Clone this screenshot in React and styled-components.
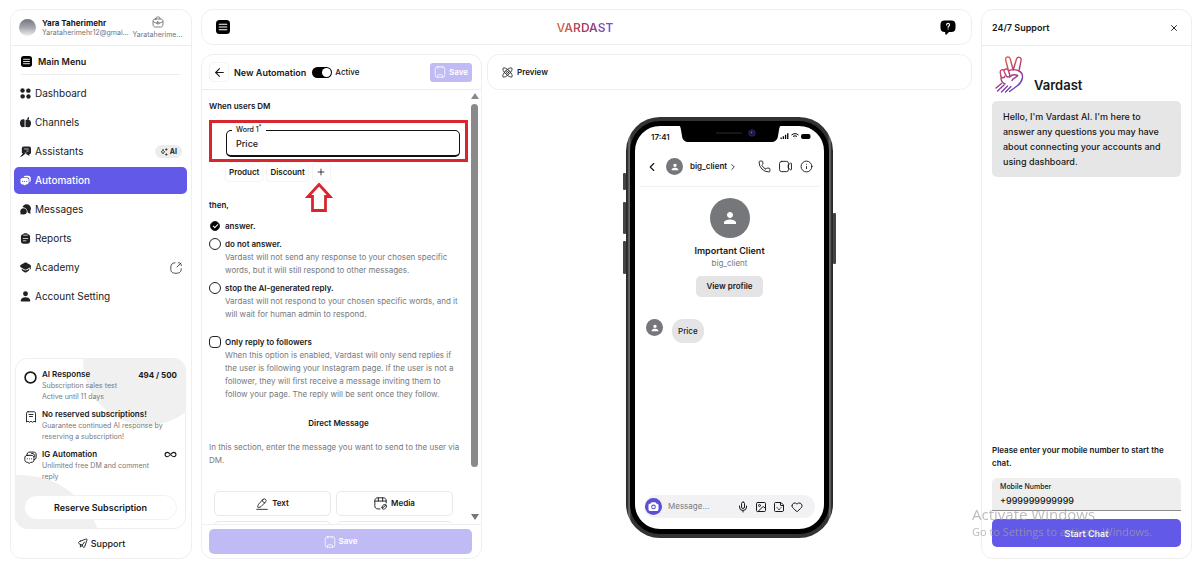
import React, { useState } from 'react';
import styled, { createGlobalStyle, css } from 'styled-components';
import {
    ArrowLeft, ChevronLeft, ChevronRight, Heart, Image, Infinity as InfinityIcon,
    Info, Mic, Phone, Plus, Sticker, X
} from 'lucide-react';
import { MdPerson } from 'react-icons/md';


const GlobalStyle = createGlobalStyle`
    *, *::before, *::after {
        box-sizing: border-box;
    }

    body {
        margin: 0;
        background: #fff;
        color: #17181a;
        font-family: Inter, "Liberation Sans", sans-serif;
        font-size: 8px;
        line-height: 13px;
    }

    button, input {
        font: inherit;
        color: inherit;
    }

    button {
        cursor: pointer;
    }

    h1, h2, h3, p, ul {
        margin: 0;
        padding: 0;
        font-size: inherit;
    }

    svg {
        display: block;
        flex-shrink: 0;
    }
`;

const Page = styled.div`
    display: grid;
    grid-template-columns: 182px minmax(0, 1fr) 211px;
    gap: 9px;
    height: 100vh;
    min-height: 560px;
    padding: 9px 8px 8px 10px;
`;

const panel = css`
    background: #fff;
    border: 1px solid #efeff0;
    border-radius: 12px;
`;

const IconButton = styled.button`
    display: grid;
    place-items: center;
    padding: 0;
    border: none;
    background: none;
`;

/* ---------- sidebar ---------- */

const Sidebar = styled.nav`
    ${panel}
    display: flex;
    flex-direction: column;
    min-height: 0;
`;

const Profile = styled.div`
    display: flex;
    align-items: center;
    gap: 6px;
    height: 36px;
    padding: 0 9px 0 8px;
    border-bottom: 1px solid #ececed;
`;

const Avatar = styled.div`
    width: 17px;
    height: 17px;
    flex-shrink: 0;
    border-radius: 50%;
    background: linear-gradient(#73757f, #a5a6ad 50%, #f0f0f1);
`;

const ProfileText = styled.div`
    flex: 1;
    min-width: 0;
    line-height: 10px;
`;

const ProfileName = styled.div`
    font-weight: 700;
`;

const SmallText = styled.div`
    color: #717377;
    font-size: 7px;
    white-space: nowrap;
`;

const Workspace = styled.div`
    display: flex;
    flex-direction: column;
    align-items: center;
    gap: 2px;
    width: 49px;
    line-height: 9px;
    color: #55575b;
`;

const MenuTitle = styled.h2`
    display: flex;
    align-items: center;
    gap: 6px;
    height: 29px;
    margin: 0 11px 0 10px;
    padding-top: 2px;
    border-bottom: 1px solid #ececed;
    font-size: 9px;
    font-weight: 600;
`;

const MenuList = styled.ul`
    display: flex;
    flex-direction: column;
    gap: 2px;
    margin-top: 5px;
    padding: 0 4px 0 3px;
    list-style: none;
`;

const MenuLink = styled.a`
    display: flex;
    align-items: center;
    gap: 4px;
    height: 27px;
    padding: 0 5px 0 6px;
    border-radius: 5px;
    background: ${props => props.$active ? "#6359e9" : "transparent"};
    color: ${props => props.$active ? "#fff" : "#202124"};
    font-size: 10px;
    font-weight: ${props => props.$active ? 500 : 400};
    text-decoration: none;
`;

const MenuEnd = styled.span`
    margin-left: auto;
`;

const AiBadge = styled.span`
    display: flex;
    align-items: center;
    gap: 2px;
    height: 13px;
    padding: 0 5px;
    border-radius: 7px;
    background: #ececed;
    font-size: 7px;
    font-weight: 700;
`;

const PlanCard = styled.section`
    position: relative;
    display: flex;
    flex-direction: column;
    margin: auto 5px 0 4px;
    padding: 9px 8px 8px;
    border: 1px solid #efeff0;
    border-radius: 12px;
    overflow: hidden;

    &::before, &::after {
        content: "";
        position: absolute;
        border-radius: 50%;
        background: #f0f0f0;
    }

    &::before {
        width: 128px;
        height: 128px;
        top: -62px;
        left: 67px;
    }

    &::after {
        width: 164px;
        height: 160px;
        left: -78px;
        bottom: -107px;
    }

    > * {
        position: relative;
        z-index: 1;
    }
`;

const PlanRow = styled.div`
    display: grid;
    grid-template-columns: 13px 1fr auto;
    gap: 5px;
    margin-bottom: 6px;
`;

const PlanIcon = styled.div`
    display: grid;
    justify-items: center;
    padding-top: 3px;
`;

const PlanTitle = styled.h3`
    font-size: 8px;
    font-weight: 600;
    line-height: 12px;
    white-space: nowrap;
`;

const PlanText = styled.p`
    color: #77797d;
    font-size: 7px;
    line-height: 11px;
`;

const PlanValue = styled.span`
    font-weight: 700;
    line-height: 15px;
`;

const ReserveButton = styled.button`
    height: 25px;
    margin-top: 7px;
    border: 1px solid #f1f1f1;
    border-radius: 13px;
    background: #fff;
    font-size: 9px;
    font-weight: 600;
`;

const SupportLink = styled.a`
    display: flex;
    align-items: center;
    justify-content: center;
    gap: 3px;
    height: 29px;
    color: inherit;
    font-size: 9px;
    font-weight: 500;
    text-decoration: none;
`;

/* ---------- centre ---------- */

const Main = styled.main`
    display: flex;
    flex-direction: column;
    gap: 9px;
    min-width: 0;
    min-height: 0;
`;

const TopBar = styled.header`
    ${panel}
    display: flex;
    align-items: center;
    justify-content: space-between;
    height: 36px;
    flex-shrink: 0;
    padding: 0 15px 0 14px;
`;

const Brand = styled.h1`
    background: linear-gradient(90deg, #d9774a, #a8375f 50%, #6359e9);
    background-clip: text;
    color: transparent;
    font-size: 12px;
    font-weight: 600;
`;

const Workarea = styled.div`
    display: grid;
    grid-template-columns: 281px minmax(0, 1fr);
    gap: 5px;
    flex: 1;
    min-height: 0;
`;

const Editor = styled.form`
    ${panel}
    display: flex;
    flex-direction: column;
    min-height: 0;
    overflow: hidden;
`;

const EditorHeader = styled.div`
    display: flex;
    align-items: center;
    gap: 5px;
    height: 35px;
    flex-shrink: 0;
    padding: 0 9px 0 7px;
    border-bottom: 1px solid #ececed;
`;

const BackButton = styled(IconButton)`
    width: 20px;
    height: 20px;
    border: 1px solid #f3f3f4;
    border-radius: 4px;
`;

const EditorTitle = styled.h2`
    font-size: 9px;
    font-weight: 600;
`;

const SwitchLabel = styled.label`
    display: flex;
    align-items: center;
    gap: 3px;
    margin-left: 1px;
    font-weight: 500;
`;

const Switch = styled.input`
    width: 20px;
    height: 11px;
    margin: 0;
    padding: 1px;
    appearance: none;
    border-radius: 6px;
    background: ${props => props.checked ? "#000" : "#b5b5b8"};

    &::before {
        content: "";
        display: block;
        width: 9px;
        height: 9px;
        margin-left: ${props => props.checked ? "auto" : 0};
        border-radius: 50%;
        background: #fff;
    }
`;

const SaveButton = styled.button`
    display: flex;
    align-items: center;
    justify-content: center;
    gap: 3px;
    height: ${props => props.$small ? "19px" : "25px"};
    padding: 0 4px;
    border: none;
    border-radius: ${props => props.$small ? "3px" : "5px"};
    background: #c1bbf5;
    color: #fff;
    font-weight: 600;
`;

const PushRight = styled.div`
    margin-left: auto;
`;

const EditorBody = styled.div`
    display: flex;
    flex: 1;
    min-height: 0;
`;

const EditorContent = styled.div`
    flex: 1;
    min-width: 0;
    padding: 10px 2px 0 7px;
    overflow: hidden;
`;

const Heading = styled.h3`
    font-weight: 600;
    text-align: ${props => props.$center ? "center" : "left"};
`;

const Highlight = styled.div`
    margin-top: 7px;
    padding: 7px 5px 2px 14px;
    border: 3px solid #d9262e;
`;

const OutlinedField = styled.div`
    position: relative;

    label {
        position: absolute;
        top: -7px;
        left: 6px;
        padding: 0 4px;
        background: #fff;
        font-size: 7px;
        font-weight: 500;
    }

    sup {
        font-size: 6px;
        line-height: 0;
    }

    input {
        display: block;
        width: 100%;
        height: 27px;
        padding: 0 9px;
        border: 1px solid #111;
        border-bottom-width: 2px;
        border-radius: 5px;
        outline: none;
        background: none;
        font-size: 9px;
        font-weight: 500;
    }
`;

const Chips = styled.div`
    position: relative;
    display: flex;
    gap: 3px;
    padding-left: 16px;
`;

const Chip = styled.button`
    display: grid;
    place-items: center;
    min-width: 19px;
    height: 20px;
    padding: 0 3px;
    border: 1px solid #f4f4f5;
    border-radius: 4px;
    background: #fff;
    font-weight: 600;
`;

/* sits over the gap under the plus chip */
const PointerArrow = styled.svg`
    position: absolute;
    top: 20px;
    left: 96px;
`;

const Then = styled(Heading)`
    margin: 17px 0 8px;
`;

const Option = styled.div`
    display: grid;
    grid-template-columns: 12px 1fr;
    column-gap: 4px;
    margin-bottom: ${props => props.$space || 5}px;
    padding-right: 6px;

    label {
        font-weight: 600;
    }

    p {
        grid-column: 2;
    }
`;

const Muted = styled.p`
    color: #77797d;
`;

const Choice = styled.input`
    display: grid;
    place-items: center;
    width: 12px;
    height: 12px;
    margin: 0;
    appearance: none;
    border: 1px solid #222;
    border-radius: ${props => props.type === "radio" ? "50%" : "4px"};
    background: #fff;

    &:checked {
        width: 10px;
        height: 10px;
        margin: 1px;
        background: #000;
    }

    &:checked::after {
        content: "";
        width: 5px;
        height: 3px;
        border: solid #fff;
        border-width: 0 0 1px 1px;
        transform: translateY(-1px) rotate(-45deg);
    }
`;

const Intro = styled(Muted)`
    margin-top: 11px;
`;

const BlockGrid = styled.div`
    display: grid;
    grid-template-columns: 1fr 1fr;
    gap: 5px;
    margin-top: 24px;
    padding: 0 15px 0 5px;
`;

const BlockButton = styled.button`
    display: flex;
    align-items: center;
    justify-content: center;
    gap: 4px;
    height: 25px;
    border: 1px solid #e9e9ea;
    border-radius: 5px;
    background: #fff;
    font-weight: 600;
`;

const ScrollRail = styled.div`
    display: flex;
    flex-direction: column;
    align-items: center;
    width: 9px;
    margin-right: 2px;
    padding: 3px 0 4px;
`;

const ScrollThumb = styled.div`
    width: 7px;
    height: 85%;
    margin: 5px 0 auto;
    border-radius: 4px;
    background: #8a8a8a;
`;

const EditorFooter = styled.div`
    display: grid;
    padding: 4px 9px 4px 7px;
    border-top: 1px solid #efeff0;
`;

const PreviewColumn = styled.section`
    display: flex;
    flex-direction: column;
    align-items: center;
    min-height: 0;
`;

const PreviewBar = styled.div`
    ${panel}
    display: flex;
    align-items: center;
    gap: 4px;
    align-self: stretch;
    height: 36px;
    flex-shrink: 0;
    padding: 0 14px;
    font-weight: 600;
`;

/* ---------- phone ---------- */

const PhoneFrame = styled.div`
    position: relative;
    display: flex;
    width: 207px;
    height: 421px;
    margin-top: 27px;
    padding: 4px;
    border-radius: 34px;
    background: linear-gradient(90deg, #29292a 1px, #3a3a3b 2px, #77777a 3px, #333 5px, #333 202px, #77777a 204px, #3a3a3b 205px, #29292a 206px);
`;

const SideKey = styled.span`
    position: absolute;
    top: ${props => props.$top}px;
    ${props => props.$right ? "right: -3px;" : "left: -3px;"}
    width: 3px;
    height: ${props => props.$size}px;
    border-radius: 1px;
    background: #444;
`;

const Screen = styled.div`
    position: relative;
    display: flex;
    flex-direction: column;
    flex: 1;
    border: 5px solid #000;
    border-radius: 30px;
    background: #fff;
    overflow: hidden;
`;

const Notch = styled.svg`
    position: absolute;
    top: -1px;
    left: 42px;
`;

const StatusBar = styled.div`
    display: flex;
    align-items: center;
    justify-content: space-between;
    height: 21px;
    padding: 2px 13px 0 16px;
    font-weight: 600;
`;

const StatusIcons = styled.div`
    display: flex;
    align-items: center;
    gap: 2px;
    padding-bottom: 3px;
`;

const ChatHeader = styled.div`
    display: flex;
    align-items: center;
    gap: 7px;
    height: 40px;
    margin: 0 5px;
    padding: 0 6px 0 5px;
    border-bottom: 1px solid #f1f1f2;
    font-weight: 600;
`;

const ChatName = styled.span`
    display: flex;
    align-items: center;
    gap: 1px;
`;

const ChatActions = styled.div`
    display: flex;
    gap: 8px;
    margin-left: auto;
`;

const PersonCircle = styled.div`
    display: grid;
    place-items: center;
    width: ${props => props.$size}px;
    height: ${props => props.$size}px;
    flex-shrink: 0;
    border-radius: 50%;
    background: #76777a;
    color: #fff;
`;

const ClientCard = styled.div`
    display: flex;
    flex-direction: column;
    align-items: center;
    padding-top: 11px;
`;

const ClientName = styled.div`
    margin-top: 6px;
    font-size: 9px;
    font-weight: 600;
`;

const ProfileButton = styled.button`
    height: 21px;
    margin-top: 6px;
    padding: 0 10px;
    border: none;
    border-radius: 5px;
    background: #e4e4e6;
    font-weight: 600;
`;

const ChatLine = styled.div`
    display: flex;
    gap: 9px;
    margin: 22px 0 0 11px;
`;

const Bubble = styled.div`
    height: 24px;
    padding: 0 6px;
    border-radius: 11px;
    background: #e4e4e6;
    font-weight: 500;
    line-height: 24px;
`;

const Composer = styled.div`
    display: flex;
    align-items: center;
    gap: 6px;
    height: 23px;
    margin: auto 9px 11px;
    padding: 0 12px 0 1px;
    border-radius: 12px;
    background: #f2f2f4;
`;

const CameraCircle = styled(PersonCircle)`
    background: #5b50cf;
`;

const MessageInput = styled.input`
    flex: 1;
    min-width: 0;
    padding: 0;
    border: none;
    outline: none;
    background: none;

    &::placeholder {
        color: #77797d;
    }
`;

const ComposerIcons = styled.div`
    display: flex;
    gap: 6px;
`;

/* ---------- support ---------- */

const SupportPanel = styled.aside`
    ${panel}
    display: flex;
    flex-direction: column;
    min-height: 0;
`;

const SupportHeader = styled.div`
    display: flex;
    align-items: center;
    justify-content: space-between;
    height: 36px;
    padding: 0 12px 0 10px;
    border-bottom: 1px solid #ececed;
    font-size: 9px;
    font-weight: 600;
`;

const SupportBody = styled.div`
    display: flex;
    flex-direction: column;
    flex: 1;
    padding: 10px 10px 11px;
`;

const BotTitle = styled.div`
    display: flex;
    align-items: flex-end;
    gap: 9px;
    padding-left: 3px;
    font-size: 13px;
    font-weight: 600;
    line-height: 18px;
`;

const Greeting = styled.p`
    margin-top: 7px;
    padding: 8px 11px;
    border-radius: 5px;
    background: #e6e6e6;
    font-size: 9px;
    font-weight: 500;
    line-height: 15px;
`;

const Prompt = styled.p`
    margin-top: auto;
    font-weight: 600;
`;

const PhoneField = styled.div`
    display: flex;
    flex-direction: column;
    margin: 8px 0;
    padding: 2px 8px;
    border-bottom: 1px solid #8c8c8c;
    border-radius: 5px 5px 0 0;
    background: #eee;

    label {
        font-size: 7px;
        font-weight: 500;
    }

    input {
        width: 100%;
        height: 15px;
        padding: 0;
        border: none;
        outline: none;
        background: none;
        font-size: 9px;
        font-weight: 500;
    }
`;

const StartButton = styled.button`
    height: 28px;
    border: none;
    border-radius: 5px;
    background: #6359e9;
    color: #fff;
    font-size: 9px;
    font-weight: 600;
`;

const Watermark = styled.div`
    position: fixed;
    right: 53px;
    bottom: 27px;
    width: 175px;
    color: rgba(160, 160, 165, 0.7);
    font-family: "Open Sans", "Noto Sans", sans-serif;
    font-size: 11px;
    line-height: 16px;
    white-space: nowrap;
    pointer-events: none;

    strong {
        display: block;
        font-size: 15px;
        font-weight: 400;
        line-height: 20px;
    }
`;

/* ---------- icons ---------- */

const MenuIcon = ({ size }) => (
    <svg width={size} height={size} viewBox="0 0 14 14">
        <rect width="14" height="14" rx="3.5" fill="#000" />
        <path d="M3.2 4.2h7.6M3.2 7h7.6M3.2 9.8h7.6" stroke="#fff" strokeWidth="1.1" strokeLinecap="round" />
    </svg>
);

const SolidIcon = ({ children, size = 11 }) => (
    <svg width={size} height={size} viewBox="0 0 24 24" fill="currentColor">{children}</svg>
);

const LineIcon = ({ children, size = 12, width = 1.8 }) => (
    <svg
        width={size} height={size} viewBox="0 0 24 24" fill="none" stroke="currentColor"
        strokeWidth={width} strokeLinecap="round" strokeLinejoin="round"
    >
        {children}
    </svg>
);

const DashboardIcon = () => (
    <SolidIcon>
        <circle cx="5.5" cy="5.5" r="4.8" />
        <rect x="13.5" y="1" width="9.5" height="9.5" rx="4" />
        <rect x="1" y="13.5" width="9.5" height="9.5" rx="4" />
        <circle cx="18.5" cy="18.5" r="4.8" />
    </SolidIcon>
);

const ChannelsIcon = () => (
    <SolidIcon>
        <path d="M8.5 5C3.500 4 0 7 0 13c0 5.500 2.500 9.500 6 9.500 1.700 0 2.500-.5 4-.5V6C9.700 5.500 9 5.100 8.500 5z" />
        <path d="M12 6.500c1.500-1 3-.8 4-.3V4c0-1.700 1-3 3.500-4v4c0 1-.6 2-1.500 2.700C22 5.500 24 9 24 13.500c0 5-2.500 9-5.500 9-2 0-2.500-.6-4-.6-.8 0-1.700.3-2.500.4z" />
    </SolidIcon>
);

const AssistantsIcon = () => (
    <SolidIcon>
        <path d="M8 1h12a4 4 0 0 1 4 4v9a4 4 0 0 1-4 4l.5 4-6-4H12l2.500-3-2-2L7 16l-3-1V5a4 4 0 0 1 4-4z" />
        <path d="M2 23l4-7 5-3 2.500 1L10 18l-4 3z" />
        <path d="M9 6.500h10M14 11h5" stroke="#fff" strokeWidth="1.5" />
        <path d="M1 23l5-3" stroke="currentColor" strokeWidth="2" />
    </SolidIcon>
);

const AutomationIcon = () => (
    <SolidIcon>
        <path d="M8 5c.4-2.500 2.300-3.500 4.500-3.500H18c3.500 0 5.500 2 5.500 5.500v4c0 2.500-1 4.300-3 5V10c0-3.500-1.500-5-5-5z" />
        <path d="M6 6.500h8c3.300 0 5 1.700 5 5v4c0 3.300-1.700 5-5 5h-1.500L10 23l-2.500-2.500H6c-3.500 0-5-1.700-5-5v-4c0-3.300 1.700-5 5-5z" />
        <g fill="#6359e9">
            <circle cx="5.500" cy="14" r="1.200" /><circle cx="10" cy="14" r="1.200" /><circle cx="14.500" cy="14" r="1.200" />
        </g>
    </SolidIcon>
);

const MessagesIcon = () => (
    <SolidIcon>
        <path d="M5.500 7C6.500 3.500 9.500.5 14 .5c5.800 0 10 4.200 10 9.500 0 2-.6 3.800-1.700 5.300l.7 5.700-6-2c0-6-4.500-12-11.500-12z" />
        <path d="M7.500 9.500c4.300 0 7.500 3 7.500 6.700S12 23 7.500 23c-1 0-2-.2-3-.6L.8 23l.6-3.300C.8 18.700.5 17.500.5 16.200c0-3.700 3-6.700 7-6.700z" />
    </SolidIcon>
);

const ReportsIcon = () => (
    <SolidIcon>
        <path d="M7 2.500C7.300 1.300 8.300.5 9.500.5h5c1.200 0 2.200.8 2.500 2 3.300.2 5 1.800 5 5.500v9c0 4-2 6.500-6 6.500H8c-4 0-6-2.500-6-6.500V8c0-3.700 1.700-5.300 5-5.500z" />
        <path d="M8 4.800h8M7 12h10M7 17h6" stroke="#fff" strokeWidth="1.600" strokeLinecap="round" />
    </SolidIcon>
);

const AcademyIcon = () => (
    <SolidIcon>
        <path d="M9 2c2-1 4-1 6 0l7 4c2.300 1.500 2.300 4 0 5.500l-7 4.500c-2 1.200-4 1.200-6 0l-7-4.500C-.3 10-.3 7.500 2 6z" />
        <path d="M3.500 14.500l5 3.200c2.200 1.300 4.800 1.300 7 0l5-3.200c0 2.500-1 4.500-3 5.500L14 22.500c-1.300.6-2.700.6-4 0L6.500 20c-2-1-3-3-3-5.500z" />
        <path d="M22.500 10v5" stroke="currentColor" strokeWidth="2" strokeLinecap="round" />
    </SolidIcon>
);

const AccountIcon = () => (
    <SolidIcon>
        <circle cx="12" cy="6" r="5.300" />
        <path d="M1.500 22c0-5.500 4-8.500 10.500-8.500s10.500 3 10.500 8.500c0 .6-.4 1-1 1h-19c-.6 0-1-.4-1-1z" />
    </SolidIcon>
);

const ExternalIcon = () => (
    <LineIcon width={1.6}>
        <path d="M14 10L22 2M17 1.500c4 0 5.500 1.500 5.500 5.500M10 1.500C4 2 1.500 5 1.500 12c0 8 2.500 10.500 10.500 10.500 7.500 0 10.300-2.500 10.500-9" />
    </LineIcon>
);

const BriefcaseIcon = () => (
    <LineIcon width={1.5}>
        <path d="M8 6V4.500C8 3 9 2 10.500 2h3C15 2 16 3 16 4.500V6M7 6h10c3.500 0 5 1.500 5 5v5c0 4-1.500 6-5 6H7c-3.500 0-5-2-5-6v-5c0-3.500 1.500-5 5-5zM2.500 11c2 2 4.500 3 7.500 3.300M21.500 11c-2 2-4.500 3-7.500 3.300" />
        <rect x="10" y="12" width="4" height="4" rx="1" />
    </LineIcon>
);

const SparkIcon = () => (
    <LineIcon size={8} width={2.2}>
        <path d="M9 5c.8 4 2 5.500 6 6.500-4 1-5.200 2.500-6 6.500-.8-4-2-5.500-6-6.500 4-1 5.200-2.500 6-6.500zM19 2v5M16.500 4.500h5M19 17v5M16.500 19.500h5" />
    </LineIcon>
);

const ReceiptIcon = () => (
    <LineIcon width={1.8}>
        <path d="M6 1.500h12c2 0 3 1 3 3V22l-3-1.500-3 2-3-2-3 2-3-2L3 22V4.500c0-2 1-3 3-3zM8 7h8M9 11h6" />
    </LineIcon>
);

const ChatsIcon = () => (
    <LineIcon size={13} width={1.8}>
        <path d="M7 8h6c4 0 5.500 1.500 5.500 5.500v2c0 4-1.500 5.500-5.500 5.500h-1L9.500 23 7 21C3 21 1.500 19.500 1.500 15.500v-2C1.500 9.500 3 8 7 8zM5 8c.4-4 2-6 6-6h6c4 0 5.500 1.500 5.500 5.500v3c0 3.500-1 5-4 5.500" />
        <path d="M6 14.500h.1M10 14.500h.1M14 14.500h.1M14 4.500c4.500 0 6 1.500 6 6" />
    </LineIcon>
);

const PlaneIcon = () => (
    <LineIcon size={11} width={2}>
        <path d="M7 7L19 2.500c2.500-.9 3.300 0 2.500 2.500L17 18.500c-1 3.200-2.500 3.200-4 .5l-1.500-3.500L7.500 14C2 12 2 9 7 7zM11.500 15.500L16 9M7.500 14v6l3-3" />
    </LineIcon>
);

const SaveIcon = ({ size = 12 }) => (
    <LineIcon size={size} width={1.6}>
        <path d="M7.500 1.500h9c3.500 0 5 1.500 5 5v11c0 3.500-1.500 5-5 5h-9c-3.500 0-5-1.500-5-5v-11c0-3.500 1.500-5 5-5zM8 2v2.500M16 2v2.500M7 22v-2c0-2 1-2.500 3-2.500h4c2 0 3 .5 3 2.500v2" />
    </LineIcon>
);

const TextIcon = () => (
    <LineIcon width={1.7}>
        <path d="M14 3L5 12.500c-.5.5-.8 1.200-.9 2L3.500 18c-.1.700.3 1.100 1 1l3.500-.6c.8-.1 1.400-.5 1.900-1L19 8c1.500-1.600 2-3.500 0-5.300-1.900-1.700-3.600-1.200-5 .3zM12.500 4.500c.5 3 2.500 5 5.300 5.300M1.500 22.700h21" />
    </LineIcon>
);

const MediaIcon = () => (
    <LineIcon size={13} width={1.7}>
        <path d="M22.500 11V7.500c0-4-1.500-6-5.500-6H7.500c-4 0-6 2-6 6V16c0 4 2 6 6 6H11M1.500 7.500h21M8 1.500v6M16 1.500v6" />
        <path d="M15 19.500c0-3.500 2-5.500 5-5.500 2 0 3 1 3 2.500 0 3.500-2.500 6-5.500 6-1.800 0-2.500-1.200-2.500-3zM16 20l6-5" />
    </LineIcon>
);

const VideoIcon = () => (
    <LineIcon size={13} width={1.7}>
        <rect x="1" y="2.500" width="16.500" height="19" rx="4" />
        <path d="M17.500 9l3.500-3c1-.9 2-.4 2 .8v10.400c0 1.200-1 1.700-2 .8l-3.500-3z" />
    </LineIcon>
);

const AtomIcon = () => (
    <LineIcon size={11} width={1.8}>
        <path d="M15.700 8.300c5.300 5.300 7.800 11 6.200 13.200-2 1.800-8.300-1-13.600-6.300S.7 4.500 2.500 2.500s7.900.5 13.200 5.800z" />
        <path d="M8.300 8.300C3 13.600.5 19.300 2.100 21.500c2 1.800 8.300-1 13.600-6.300s7.600-10.700 5.800-12.700-7.900.5-13.200 5.800z" />
        <circle cx="12" cy="12" r="2.300" />
    </LineIcon>
);

const HelpIcon = () => (
    <svg width="16" height="15" viewBox="0 0 16 15">
        <path d="M4.500.5h7C14 .5 15.500 2 15.500 4.500V8c0 2.500-1.500 4-4 4H9l-2.500 2.400c-.6.5-1.300.2-1.300-.6V12H4.500C2 12 .5 10.500.5 8V4.500C.5 2 2 .5 4.500.5z" fill="#000" />
        <path d="M6.600 5c0-1 .7-1.600 1.500-1.600S9.600 4 9.600 4.900c0 1-1.500 1.200-1.500 2.300M8.100 8.900v.1" fill="none" stroke="#fff" strokeWidth="1.100" strokeLinecap="round" />
    </svg>
);

const CameraIcon = () => (
    <svg width="11" height="11" viewBox="0 0 24 24">
        <path d="M8 2.500h8l2 3c3.500.2 5 1.700 5 4.500v7c0 3.300-1.500 5-5 5H6c-3.500 0-5-1.700-5-5v-7c0-2.800 1.500-4.300 5-4.500z" fill="#fff" />
        <circle cx="12" cy="13" r="4" fill="#fff" stroke="#5b50cf" strokeWidth="2.200" />
    </svg>
);

const StatusGlyphs = () => (
    <StatusIcons>
        <svg width="9" height="6" viewBox="0 0 9 6">
            <path d="M.5 4.500h1.300V6H.5zM2.700 3.300H4V6H2.700zM4.900 1.800h1.300V6H4.900zM7.100.2h1.300V6H7.100z" />
        </svg>
        <svg width="8" height="6" viewBox="0 0 8 6" fill="none" stroke="#000">
            <path d="M.5 2C2.500.2 5.500.2 7.500 2M2 3.600c1.200-1 2.800-1 4 0M3.800 5.100h.4" />
        </svg>
        <svg width="10" height="5" viewBox="0 0 10 5"><rect width="9.500" height="5" rx="2" /></svg>
    </StatusIcons>
);

const HandLogo = () => (
    <svg width="30" height="38" viewBox="0 0 30 38" fill="none" strokeWidth="1.400" strokeLinecap="round" strokeLinejoin="round">
        <defs>
            <linearGradient id="hand" x1="6" y1="4" x2="24" y2="32" gradientUnits="userSpaceOnUse">
                <stop offset="0" stopColor="#e0684a" />
                <stop offset=".5" stopColor="#b03a78" />
                <stop offset="1" stopColor="#5546c8" />
            </linearGradient>
        </defs>
        <g stroke="url(#hand)">
            <path d="M13 13L10.700 4c-.8-3.200 3.600-4.300 4.500-1.200L18.200 14M18.200 14l3.300-11c1-3 5.400-1.900 4.600 1.200L24 15" />
            <path d="M9.500 13.800c1.200-1.400 3.600-.9 4 .9l1.200 4c.6 2.300-2.700 3.300-3.500 1.100l-2-4c-.3-.8-.2-1.500.3-2z" />
            <path d="M9 14.300c-1.400-1.200-3.700-.3-3.800 1.700l.6 4c.5 2.400 3.700 2.300 4 .2M13.500 14.500c4-1.200 8-1 10.500.5 3 1.500 4 4 3.300 7.500-.8 3.700-3.300 6-5.300 7.500L14.500 35.500M14.700 21c2-2.300 5.300-2.600 8-1.500-1 2.300-4.700 2-5.700 5M6 21.500c0 3.500 1.500 5.500 4 6.500" />
            <path d="M6.500 27.500L1 32M9 29l-6.500 6M12.500 30L6.500 36M16 30.500l-5.500 5.500" />
        </g>
    </svg>
);


const menuItems = [
    { label: "Dashboard", icon: <DashboardIcon /> },
    { label: "Channels", icon: <ChannelsIcon /> },
    { label: "Assistants", icon: <AssistantsIcon />, end: <AiBadge><SparkIcon />AI</AiBadge> },
    { label: "Automation", icon: <AutomationIcon />, active: true },
    { label: "Messages", icon: <MessagesIcon /> },
    { label: "Reports", icon: <ReportsIcon /> },
    { label: "Academy", icon: <AcademyIcon />, end: <ExternalIcon /> },
    { label: "Account Setting", icon: <AccountIcon /> },
];

const plans = [
    {
        title: "AI Response",
        text: <>Subscription sales test<br />Active until 11 days</>,
        icon: <LineIcon size={13} width={3}><circle cx="12" cy="12" r="10" /></LineIcon>,
        value: "494 / 500",
    },
    {
        title: "No reserved subscriptions!",
        text: <>Guarantee continued AI response by<br />reserving a subscription!</>,
        icon: <ReceiptIcon />,
    },
    {
        title: "IG Automation",
        text: <>Unlimited free DM and comment<br />reply</>,
        icon: <ChatsIcon />,
        value: <InfinityIcon size={13} strokeWidth={2} />,
    },
];

const answers = [
    { id: "answer", label: "answer." },
    {
        id: "skip",
        label: "do not answer.",
        text: "Vardast will not send any response to your chosen specific words, but it will still respond to other messages.",
    },
    {
        id: "stop",
        label: "stop the AI-generated reply.",
        text: "Vardast will not respond to your chosen specific words, and it will wait for human admin to respond.",
        space: 15,
    },
];

const SideMenu = () => (
    <Sidebar>
        <Profile>
            <Avatar />
            <ProfileText>
                <ProfileName>Yara Taherimehr</ProfileName>
                <SmallText>Yarataherimehr12@gmai...</SmallText>
            </ProfileText>
            <Workspace>
                <BriefcaseIcon />
                <SmallText>Yarataherime...</SmallText>
            </Workspace>
        </Profile>
        <MenuTitle><MenuIcon size={11} />Main Menu</MenuTitle>
        <MenuList>
            {menuItems.map(item => (
                <li key={item.label}>
                    <MenuLink href="#" $active={item.active}>
                        {item.icon}
                        {item.label}
                        {item.end && <MenuEnd>{item.end}</MenuEnd>}
                    </MenuLink>
                </li>
            ))}
        </MenuList>
        <PlanCard>
            {plans.map(plan => (
                <PlanRow key={plan.title}>
                    <PlanIcon>{plan.icon}</PlanIcon>
                    <div>
                        <PlanTitle>{plan.title}</PlanTitle>
                        <PlanText>{plan.text}</PlanText>
                    </div>
                    {plan.value && <PlanValue>{plan.value}</PlanValue>}
                </PlanRow>
            ))}
            <ReserveButton>Reserve Subscription</ReserveButton>
        </PlanCard>
        <SupportLink href="#"><PlaneIcon />Support</SupportLink>
    </Sidebar>
);

const AutomationEditor = ({ word, setWord }) => {
    const [active, setActive] = useState(true);
    const [answer, setAnswer] = useState("answer");
    const [followers, setFollowers] = useState(false);

    return (
        <Editor onSubmit={event => event.preventDefault()}>
            <EditorHeader>
                <BackButton type="button" aria-label="Back"><ArrowLeft size={13} strokeWidth={2} /></BackButton>
                <EditorTitle>New Automation</EditorTitle>
                <SwitchLabel>
                    <Switch type="checkbox" checked={active} onChange={event => setActive(event.target.checked)} />
                    Active
                </SwitchLabel>
                <PushRight>
                    <SaveButton $small><SaveIcon />Save</SaveButton>
                </PushRight>
            </EditorHeader>
            <EditorBody>
                <EditorContent>
                    <Heading>When users DM</Heading>
                    <Highlight>
                        <OutlinedField>
                            <input id="word" value={word} onChange={event => setWord(event.target.value)} />
                            <label htmlFor="word">Word 1<sup>*</sup></label>
                        </OutlinedField>
                    </Highlight>
                    <Chips>
                        <Chip type="button">Product</Chip>
                        <Chip type="button">Discount</Chip>
                        <Chip type="button" aria-label="Add word"><Plus size={10} strokeWidth={2} /></Chip>
                        <PointerArrow width="28" height="31" viewBox="0 0 28 31">
                            <path d="M14 2.500L25 14.500h-4.500V28.500h-13V14.500H3z" fill="#fff" stroke="#d9262e" strokeWidth="2.800" />
                        </PointerArrow>
                    </Chips>
                    <Then>then,</Then>
                    {answers.map(item => (
                        <Option key={item.id} $space={item.space}>
                            <Choice
                                type="radio"
                                name="answer"
                                id={item.id}
                                checked={answer === item.id}
                                onChange={() => setAnswer(item.id)}
                            />
                            <label htmlFor={item.id}>{item.label}</label>
                            {item.text && <Muted>{item.text}</Muted>}
                        </Option>
                    ))}
                    <Option $space={16}>
                        <Choice
                            type="checkbox"
                            id="followers"
                            checked={followers}
                            onChange={event => setFollowers(event.target.checked)}
                        />
                        <label htmlFor="followers">Only reply to followers</label>
                        <Muted>
                            When this option is enabled, Vardast will only send replies if the user is following your
                            Instagram page. If the user is not a follower, they will first receive a message inviting
                            them to follow your page. The reply will be sent once they follow.
                        </Muted>
                    </Option>
                    <Heading $center>Direct Message</Heading>
                    <Intro>In this section, enter the message you want to send to the user via DM.</Intro>
                    <BlockGrid>
                        <BlockButton type="button"><TextIcon />Text</BlockButton>
                        <BlockButton type="button"><MediaIcon />Media</BlockButton>
                        <BlockButton type="button" aria-label="Voice" />
                        <BlockButton type="button" aria-label="Card" />
                    </BlockGrid>
                </EditorContent>
                <ScrollRail>
                    <svg width="8" height="6"><path d="M4 0l4 6H0z" fill="#8a8a8a" /></svg>
                    <ScrollThumb />
                    <svg width="8" height="6"><path d="M4 6l4-6H0z" fill="#777" /></svg>
                </ScrollRail>
            </EditorBody>
            <EditorFooter>
                <SaveButton><SaveIcon />Save</SaveButton>
            </EditorFooter>
        </Editor>
    );
};

const PhonePreview = ({ word }) => (
    <PhoneFrame>
        <SideKey $top={56} $size={17} />
        <SideKey $top={85} $size={32} />
        <SideKey $top={124} $size={33} />
        <SideKey $top={96} $size={51} $right />
        <Screen>
            <Notch width="106" height="18" viewBox="0 0 106 18">
                <path d="M0 0h106c-3 0-3.500 2-4 5l-1 6c-.7 4-3 6-7 6H12c-4 0-6.500-2-7-6L4 5C3.500 2 3 0 0 0z" />
                <path d="M39 8h26" stroke="#2c2c30" />
                <circle cx="75" cy="8" r="3.200" fill="#15153c" stroke="#2a2a58" />
                <circle cx="74.500" cy="7.500" r="1" fill="#5656c4" />
            </Notch>
            <StatusBar><span>17:41</span><StatusGlyphs /></StatusBar>
            <ChatHeader>
                <IconButton aria-label="Back"><ChevronLeft size={14} strokeWidth={2} /></IconButton>
                <PersonCircle $size={17}><MdPerson size={10} /></PersonCircle>
                <ChatName>big_client<ChevronRight size={10} strokeWidth={2} /></ChatName>
                <ChatActions>
                    <Phone size={13} strokeWidth={1.7} />
                    <VideoIcon />
                    <Info size={13} strokeWidth={1.7} />
                </ChatActions>
            </ChatHeader>
            <ClientCard>
                <PersonCircle $size={40}><MdPerson size={18} /></PersonCircle>
                <ClientName>Important Client</ClientName>
                <Muted>big_client</Muted>
                <ProfileButton>View profile</ProfileButton>
            </ClientCard>
            <ChatLine>
                <PersonCircle $size={17}><MdPerson size={10} /></PersonCircle>
                <Bubble>{word}</Bubble>
            </ChatLine>
            <Composer>
                <CameraCircle $size={17}><CameraIcon /></CameraCircle>
                <MessageInput aria-label="Message" placeholder="Message..." />
                <ComposerIcons>
                    <Mic size={12} strokeWidth={2} />
                    <Image size={12} strokeWidth={2} />
                    <Sticker size={12} strokeWidth={2} />
                    <Heart size={12} strokeWidth={2} />
                </ComposerIcons>
            </Composer>
        </Screen>
    </PhoneFrame>
);

const Support = () => {
    const [mobile, setMobile] = useState("+999999999999");

    return (
        <SupportPanel>
            <SupportHeader>
                24/7 Support
                <IconButton aria-label="Close"><X size={10} strokeWidth={2.2} /></IconButton>
            </SupportHeader>
            <SupportBody>
                <BotTitle><HandLogo />Vardast</BotTitle>
                <Greeting>
                    Hello, I'm Vardast AI. I'm here to answer any questions you may have about connecting your
                    accounts and using dashboard.
                </Greeting>
                <Prompt>Please enter your mobile number to start the chat.</Prompt>
                <PhoneField>
                    <label htmlFor="mobile">Mobile Number</label>
                    <input id="mobile" type="tel" value={mobile} onChange={event => setMobile(event.target.value)} />
                </PhoneField>
                <StartButton>Start Chat</StartButton>
            </SupportBody>
        </SupportPanel>
    );
};

const App = () => {
    const [word, setWord] = useState("Price");

    return (
        <>
            <GlobalStyle />
            <Page>
                <SideMenu />
                <Main>
                    <TopBar>
                        <IconButton aria-label="Toggle menu"><MenuIcon size={14} /></IconButton>
                        <Brand>VARDAST</Brand>
                        <IconButton aria-label="Help"><HelpIcon /></IconButton>
                    </TopBar>
                    <Workarea>
                        <AutomationEditor word={word} setWord={setWord} />
                        <PreviewColumn>
                            <PreviewBar><AtomIcon />Preview</PreviewBar>
                            <PhonePreview word={word} />
                        </PreviewColumn>
                    </Workarea>
                </Main>
                <Support />
            </Page>
            <Watermark><strong>Activate Windows</strong>Go to Settings to activate Windows.</Watermark>
        </>
    );
};

export default App;
